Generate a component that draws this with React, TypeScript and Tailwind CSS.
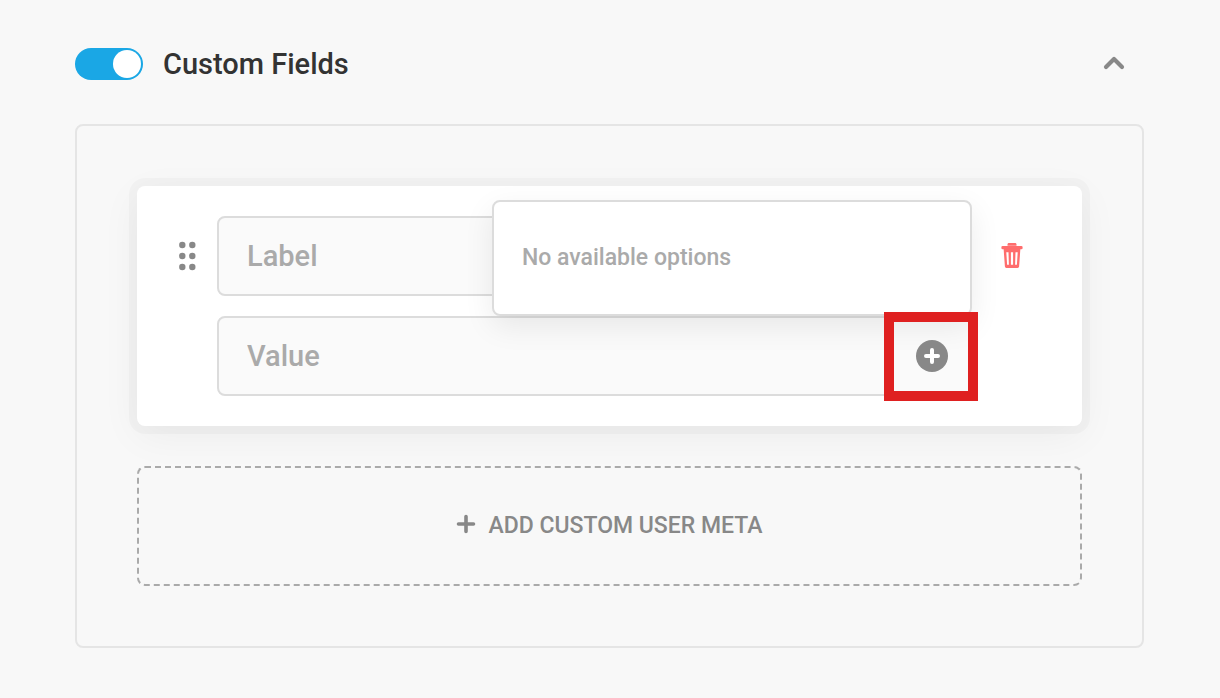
import { useState } from "react";

function GripIcon() {
  return (
    <svg width="18" height="30" viewBox="0 0 18 30" fill="currentColor" aria-hidden="true">
      {[4, 15, 26].map((y) => (
        <g key={y}>
          <circle cx="4.300" cy={y} r="3.200" />
          <circle cx="14.300" cy={y} r="3.200" />
        </g>
      ))}
    </svg>
  );
}

function TrashIcon() {
  return (
    <svg width="22" height="26" viewBox="0 0 22 26" fill="currentColor" aria-hidden="true">
      <path d="M6.500 2.800V1.400C6.500 .6 7.100 0 8 0h6c.9 0 1.500 .6 1.500 1.400v1.400z" />
      <rect x="0.400" y="3.100" width="21.200" height="3.200" rx="1.200" />
      <path
        fillRule="evenodd"
        d="M2.600 5.600h16.800l-1.300 18c-.1.900-.7 1.400-1.500 1.400H5.400c-.8 0-1.400-.5-1.500-1.400zM5.300 9.300l.8 12.500h1.800L7.500 9.300zM9.900 9.300v12.500h2.200V9.300zM14.500 9.300l-.4 12.500h1.800l.8-12.500z"
      />
    </svg>
  );
}

function PlusCircleIcon() {
  return (
    <svg width="32" height="32" viewBox="0 0 32 32" aria-hidden="true">
      <circle cx="16" cy="16" r="16" fill="#888888" />
      <path d="M16 10v12M10 16h12" stroke="#ffffff" strokeWidth="4" strokeLinecap="round" />
    </svg>
  );
}

const fieldClass =
  "block h-20 w-full rounded-lg border-2 border-[#dcdcdc] bg-[#fafafa] px-7 text-[29px] font-medium text-[#333333] outline-none placeholder:text-[#aaaaaa] placeholder:opacity-100";

export default function App() {
  const [enabled, setEnabled] = useState(true);

  return (
    <main className="min-h-screen bg-[#f8f8f8] pt-11 pr-[76px] pb-12 pl-[75px] font-['Roboto','Liberation_Sans',sans-serif]">
      <header className="flex h-10 items-center justify-between pr-[18px]">
        <label className="flex items-center gap-5">
          <input
            type="checkbox"
            role="switch"
            checked={enabled}
            onChange={(e) => setEnabled(e.target.checked)}
            className="h-8 w-[68px] appearance-none rounded-full bg-[#bbbbbb] p-0.5 before:block before:size-7 before:rounded-full before:bg-white checked:bg-[#1aa7e5] checked:before:ml-9"
          />
          <span className="text-[29px] leading-10 font-medium text-[#333333]">Custom Fields</span>
        </label>
        <button type="button" aria-label="Collapse section" className="text-[#888888]">
          <svg width="24" height="24" viewBox="0 0 24 24" fill="none" aria-hidden="true">
            <path d="M4 15l8-8 8 8" stroke="currentColor" strokeWidth="4.200" strokeLinecap="round" strokeLinejoin="round" />
          </svg>
        </button>
      </header>

      <section className="mt-10 flex flex-col gap-10 rounded-lg border-2 border-[#e5e5e5] p-[60px]">
        <div className="flex items-start rounded-lg bg-white py-[30px] pr-[30px] pl-5 shadow-[0_0_0_8px_rgba(0,0,0,0.025),0_10px_40px_rgba(0,0,0,0.05)]">
          <button type="button" aria-label="Reorder field" className="flex h-20 w-[60px] shrink-0 items-center justify-center text-[#888888]">
            <GripIcon />
          </button>
          <div className="flex min-w-0 flex-1 flex-col gap-5">
            <input type="text" aria-label="Label" placeholder="Label" className={fieldClass} />
            <div className="relative">
              <input type="text" aria-label="Value" placeholder="Value" className={fieldClass} />
              <div className="absolute right-0 bottom-full flex h-29 w-[480px] items-center rounded-lg border-2 border-[#dcdcdc] bg-white px-7 text-[23px] font-medium text-[#aaaaaa] shadow-[0_10px_30px_rgba(0,0,0,0.08)]">
                No available options
              </div>
              <button
                type="button"
                aria-label="Insert option"
                className="absolute -top-1 -right-1.5 flex h-[89px] w-[94px] items-center justify-center border-10 border-[#df2020] pb-px pl-0.5"
              >
                <PlusCircleIcon />
              </button>
            </div>
          </div>
          <button type="button" aria-label="Delete field" className="flex h-20 w-20 shrink-0 items-center justify-center text-[#ff6d6d]">
            <TrashIcon />
          </button>
        </div>

        <button
          type="button"
          className="flex h-30 w-full items-center justify-center gap-3 rounded-lg border-2 border-dashed border-[#aaaaaa] text-[23px] font-medium text-[#888888]"
        >
          <svg width="20" height="24" viewBox="0 0 20 24" fill="none" aria-hidden="true">
            <path d="M10 2.500v15M2.500 10h15" stroke="currentColor" strokeWidth="3.600" strokeLinecap="round" />
          </svg>
          ADD CUSTOM USER META
        </button>
      </section>
    </main>
  );
}
